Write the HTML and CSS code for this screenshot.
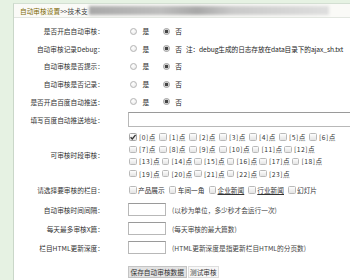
FILE: index.html
```html
<!DOCTYPE html>
<html lang="zh-CN">
<head>
<meta charset="utf-8">
<title>自动审核设置</title>
<link rel="stylesheet" href="styles.css">
</head>
<body>
<div class="page">
  <div class="panel">
    <div class="head">
      <span class="title">自动审核设置</span><span class="crumb">&gt;&gt;技术支</span><span class="blur"></span>
    </div>
    <div class="form">
      <div class="row r-radio">
        <div class="lbl">是否开启自动审核：</div>
        <div class="val"><span class="radio"></span><span class="opt">是</span><span class="radio on"></span><span class="opt">否</span></div>
      </div>
      <div class="row r-radio">
        <div class="lbl">自动审核记录Debug：</div>
        <div class="val"><span class="radio"></span><span class="opt">是</span><span class="radio on"></span><span class="opt">否</span><span class="note">注：debug生成的日志存放在data目录下的ajax_sh.txt</span></div>
      </div>
      <div class="row r-radio">
        <div class="lbl">自动审核是否提示：</div>
        <div class="val"><span class="radio"></span><span class="opt">是</span><span class="radio on"></span><span class="opt">否</span></div>
      </div>
      <div class="row r-radio">
        <div class="lbl">自动审核是否记录：</div>
        <div class="val"><span class="radio"></span><span class="opt">是</span><span class="radio on"></span><span class="opt">否</span></div>
      </div>
      <div class="row r-radio">
        <div class="lbl">是否开启百度自动推送：</div>
        <div class="val"><span class="radio"></span><span class="opt">是</span><span class="radio on"></span><span class="opt">否</span></div>
      </div>
      <div class="row r-url">
        <div class="lbl">填写百度自动推送地址：</div>
        <div class="val"><input class="txt wide" type="text"></div>
      </div>
      <div class="row r-hours">
        <div class="lbl">可审核时段审核：</div>
        <div class="val">
          <div class="hours">
            <span class="h"><span class="cb on"><svg viewBox="0 0 8 8" width="8" height="8"><path d="M1.6 4.2 L3.3 6 L6.6 1.8" fill="none" stroke="#333" stroke-width="1.3"/></svg></span>[0]点</span>
            <span class="h"><span class="cb"></span>[1]点</span>
            <span class="h"><span class="cb"></span>[2]点</span>
            <span class="h"><span class="cb"></span>[3]点</span>
            <span class="h"><span class="cb"></span>[4]点</span>
            <span class="h"><span class="cb"></span>[5]点</span>
            <span class="h"><span class="cb"></span>[6]点</span>
            <span class="h"><span class="cb"></span>[7]点</span>
            <span class="h"><span class="cb"></span>[8]点</span>
            <span class="h"><span class="cb"></span>[9]点</span>
            <span class="h w2"><span class="cb"></span>[10]点</span>
            <span class="h w2"><span class="cb"></span>[11]点</span>
            <span class="h w2"><span class="cb"></span>[12]点</span>
            <span class="h w2"><span class="cb"></span>[13]点</span>
            <span class="h w2"><span class="cb"></span>[14]点</span>
            <span class="h w2"><span class="cb"></span>[15]点</span>
            <span class="h w2"><span class="cb"></span>[16]点</span>
            <span class="h w2"><span class="cb"></span>[17]点</span>
            <span class="h w2"><span class="cb"></span>[18]点</span>
            <span class="h w2"><span class="cb"></span>[19]点</span>
            <span class="h w2"><span class="cb"></span>[20]点</span>
            <span class="h w2"><span class="cb"></span>[21]点</span>
            <span class="h w2"><span class="cb"></span>[22]点</span>
            <span class="h w2"><span class="cb"></span>[23]点</span>
          </div>
        </div>
      </div>
      <div class="row r-cat">
        <div class="lbl">请选择要审核的栏目：</div>
        <div class="val cats">
          <span class="c"><span class="cb"></span>产品展示</span>
          <span class="c"><span class="cb"></span>车间一角</span>
          <span class="c"><span class="cb"></span><u>企业新闻</u></span>
          <span class="c"><span class="cb"></span><u>行业新闻</u></span>
          <span class="c"><span class="cb"></span>幻灯片</span>
        </div>
      </div>
      <div class="row r-in">
        <div class="lbl">自动审核时间间隔：</div>
        <div class="val"><input class="txt small" type="text"><span class="hint">(以秒为单位，多少秒才会运行一次)</span></div>
      </div>
      <div class="row r-in">
        <div class="lbl">每天最多审核X篇：</div>
        <div class="val"><input class="txt small" type="text"><span class="hint">(每天审核的最大篇数)</span></div>
      </div>
      <div class="row r-in">
        <div class="lbl">栏目HTML更新深度：</div>
        <div class="val"><input class="txt small" type="text"><span class="hint">(HTML更新深度是指更新栏目HTML的分页数)</span></div>
      </div>
      <div class="row r-btn">
        <div class="lbl"></div>
        <div class="val"><button class="btn save" type="button">保存自动审核数据</button><button class="btn test" type="button">测试审核</button></div>
      </div>
    </div>
  </div>
</div>
</body>
</html>
```
FILE: styles.css
```css
html, body {
  margin: 0;
  height: 280px;
  overflow: hidden;
}
body {
  background: #e6f2e3;
  font-family: "Noto Sans CJK SC", "Liberation Sans", sans-serif;
  font-size: 6.7px;
  color: #333;
}
.page {
  box-sizing: border-box;
  height: 280px;
  padding: 3px 0 0 13px;
}
.panel {
  height: 100%;
  background: #fff;
  border-left: 1px solid #cad7c9;
  border-top: 1px solid #d3dfd2;
}
.head {
  height: 13px;
  display: flex;
  align-items: center;
  padding-left: 6px;
  background: #fafaf7;
  border-bottom: 1px solid #e2e6e0;
  white-space: nowrap;
  overflow: hidden;
}
.title {
  color: #806a08;
}
.crumb {
  color: #444;
}
.blur {
  display: block;
  width: 240px;
  height: 9px;
  margin-left: 1px;
  background: linear-gradient(90deg, #a9a9a9 0%, #bdbdbd 30%, #a8a8a8 45%, #c9c9c9 60%, #dedede 100%);
  filter: blur(1.5px);
}
.form {
  padding-top: 4.5px;
}
.row {
  display: flex;
  align-items: center;
}
.lbl {
  width: 90px;
  flex: none;
  text-align: right;
  white-space: nowrap;
  color: #333;
}
.val {
  margin-left: 24px;
  display: flex;
  align-items: center;
  white-space: nowrap;
}
.r-radio {
  height: 17.6px;
}
.r-url {
  height: 19px;
}
.r-hours {
  padding: 1.5px 0 0;
}
.r-cat {
  height: 20.5px;
}
.r-in {
  height: 19px;
}
.r-btn {
  padding-top: 9px;
}
.radio {
  box-sizing: border-box;
  width: 7px;
  height: 7px;
  border-radius: 50%;
  border: 1px solid #b4b4b4;
  background: radial-gradient(circle at 40% 35%, #fff 0%, #e6e6e6 100%);
  margin-left: 1.5px;
  flex: none;
}
.radio.on {
  margin-left: 14px;
  background: radial-gradient(circle, #444 0 1.6px, #e8e8e8 2.1px);
  border-color: #9c9c9c;
}
.opt {
  margin-left: 6px;
  color: #222;
}
.radio.on + .opt {
  margin-left: 5px;
}
.note {
  margin-left: 4px;
  color: #222;
  letter-spacing: -0.1px;
}
.txt {
  box-sizing: border-box;
  border: 1px solid #b8b8b8;
  border-top-color: #9a9a9a;
  background: #fff;
  padding: 0;
  margin: 0;
  font: inherit;
}
.txt.wide {
  width: 230px;
  height: 15px;
}
.txt.small {
  width: 38px;
  height: 13px;
}
.hint {
  margin-left: 6px;
  color: #444;
}
.hours {
  display: flex;
  flex-wrap: wrap;
  width: 214px;
}
.h {
  width: 30px;
  height: 12.2px;
  display: flex;
  align-items: center;
  white-space: nowrap;
  color: #333;
  letter-spacing: 0.5px;
}
.h.w2 {
  width: 32.5px;
}
.cb {
  box-sizing: border-box;
  width: 7.5px;
  height: 7.5px;
  border: 1px solid #b9b9b9;
  border-radius: 1.5px;
  background: linear-gradient(#fdfdfd, #e4e4e4);
  margin: 0 2.5px 0 1px;
  flex: none;
  display: flex;
  align-items: center;
  justify-content: center;
  overflow: visible;
}
.cb.on {
  border-color: #a6a6a6;
}
.cb svg {
  display: block;
  flex: none;
}
.cats {
  gap: 3px;
}
.cats .c {
  display: flex;
  align-items: center;
  white-space: nowrap;
}
.cats .cb {
  margin-right: 1.5px;
}
.btn {
  font: inherit;
  margin: 0;
  height: 12px;
  padding: 0 1.5px;
  color: #333;
  border: 1px solid #c4c4c4;
  border-radius: 0;
  line-height: 10px;
}
.btn.save {
  background: #e2e2e2;
}
.btn.test {
  background: #f7f7f7;
  border-color: #dedede;
  margin-left: 1px;
}
```
